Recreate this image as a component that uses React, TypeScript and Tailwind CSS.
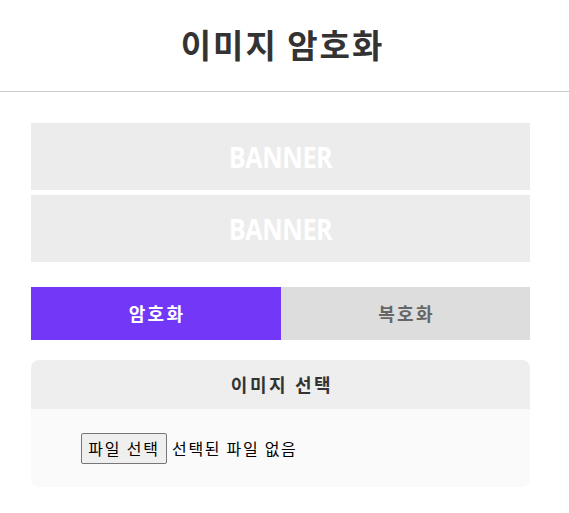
export default function App() {
  const kr = { fontFamily: '"Noto Sans CJK KR", "Noto Sans", sans-serif' };
  return (
    <div className="w-[569px] min-h-[513px] bg-white" style={kr}>
      <header className="h-[92px] border-b border-[#cccccc] flex items-center justify-center">
        <h1 className="text-[33px] font-bold text-[#333333] leading-none tracking-[2px] -mt-[3px] pr-[4px]">이미지 암호화</h1>
      </header>
      <main className="px-[31px] pt-[31px]">
        <div className="flex flex-col gap-[5px] w-[499px]">
          {[0, 1].map((i) => (
            <div key={i} className="h-[67px] bg-[#ececec] flex items-center justify-center">
              <span
                className="text-white font-bold text-[29px] leading-none inline-block scale-x-[0.87]"
                style={{ fontFamily: '"Open Sans", sans-serif', letterSpacing: '-0.5px' }}
              >
                BANNER
              </span>
            </div>
          ))}
        </div>
        <div className="mt-[25px] flex w-[499px] h-[53px]">
          <button className="w-[250px] bg-[#7237f7] text-white font-bold text-[18px] tracking-[2.3px] pl-[2px] flex items-center justify-center">암호화</button>
          <button className="flex-1 bg-[#dddddd] text-[#666666] font-bold text-[18px] tracking-[2.3px] pl-[2px] flex items-center justify-center">복호화</button>
        </div>
        <div className="mt-[20px] w-[499px] rounded-[8px] overflow-hidden">
          <div className="h-[49px] bg-[#eeeeee] flex items-center justify-center">
            <span className="text-[18px] font-bold text-[#333333] tracking-[2.6px] pl-[3px]">이미지 선택</span>
          </div>
          <div className="h-[78px] bg-[#fafafa] flex items-center pl-[50px]">
            <div className="flex items-center gap-[5px] text-[16px] text-black">
              <span className="h-[31px] w-[86px] border border-[#767676] rounded-[2px] bg-[#efefef] flex items-center justify-center leading-none tracking-[1.8px]">파일 선택</span>
              <span className="leading-none tracking-[1.7px]">선택된 파일 없음</span>
            </div>
          </div>
        </div>
      </main>
    </div>
  );
}
